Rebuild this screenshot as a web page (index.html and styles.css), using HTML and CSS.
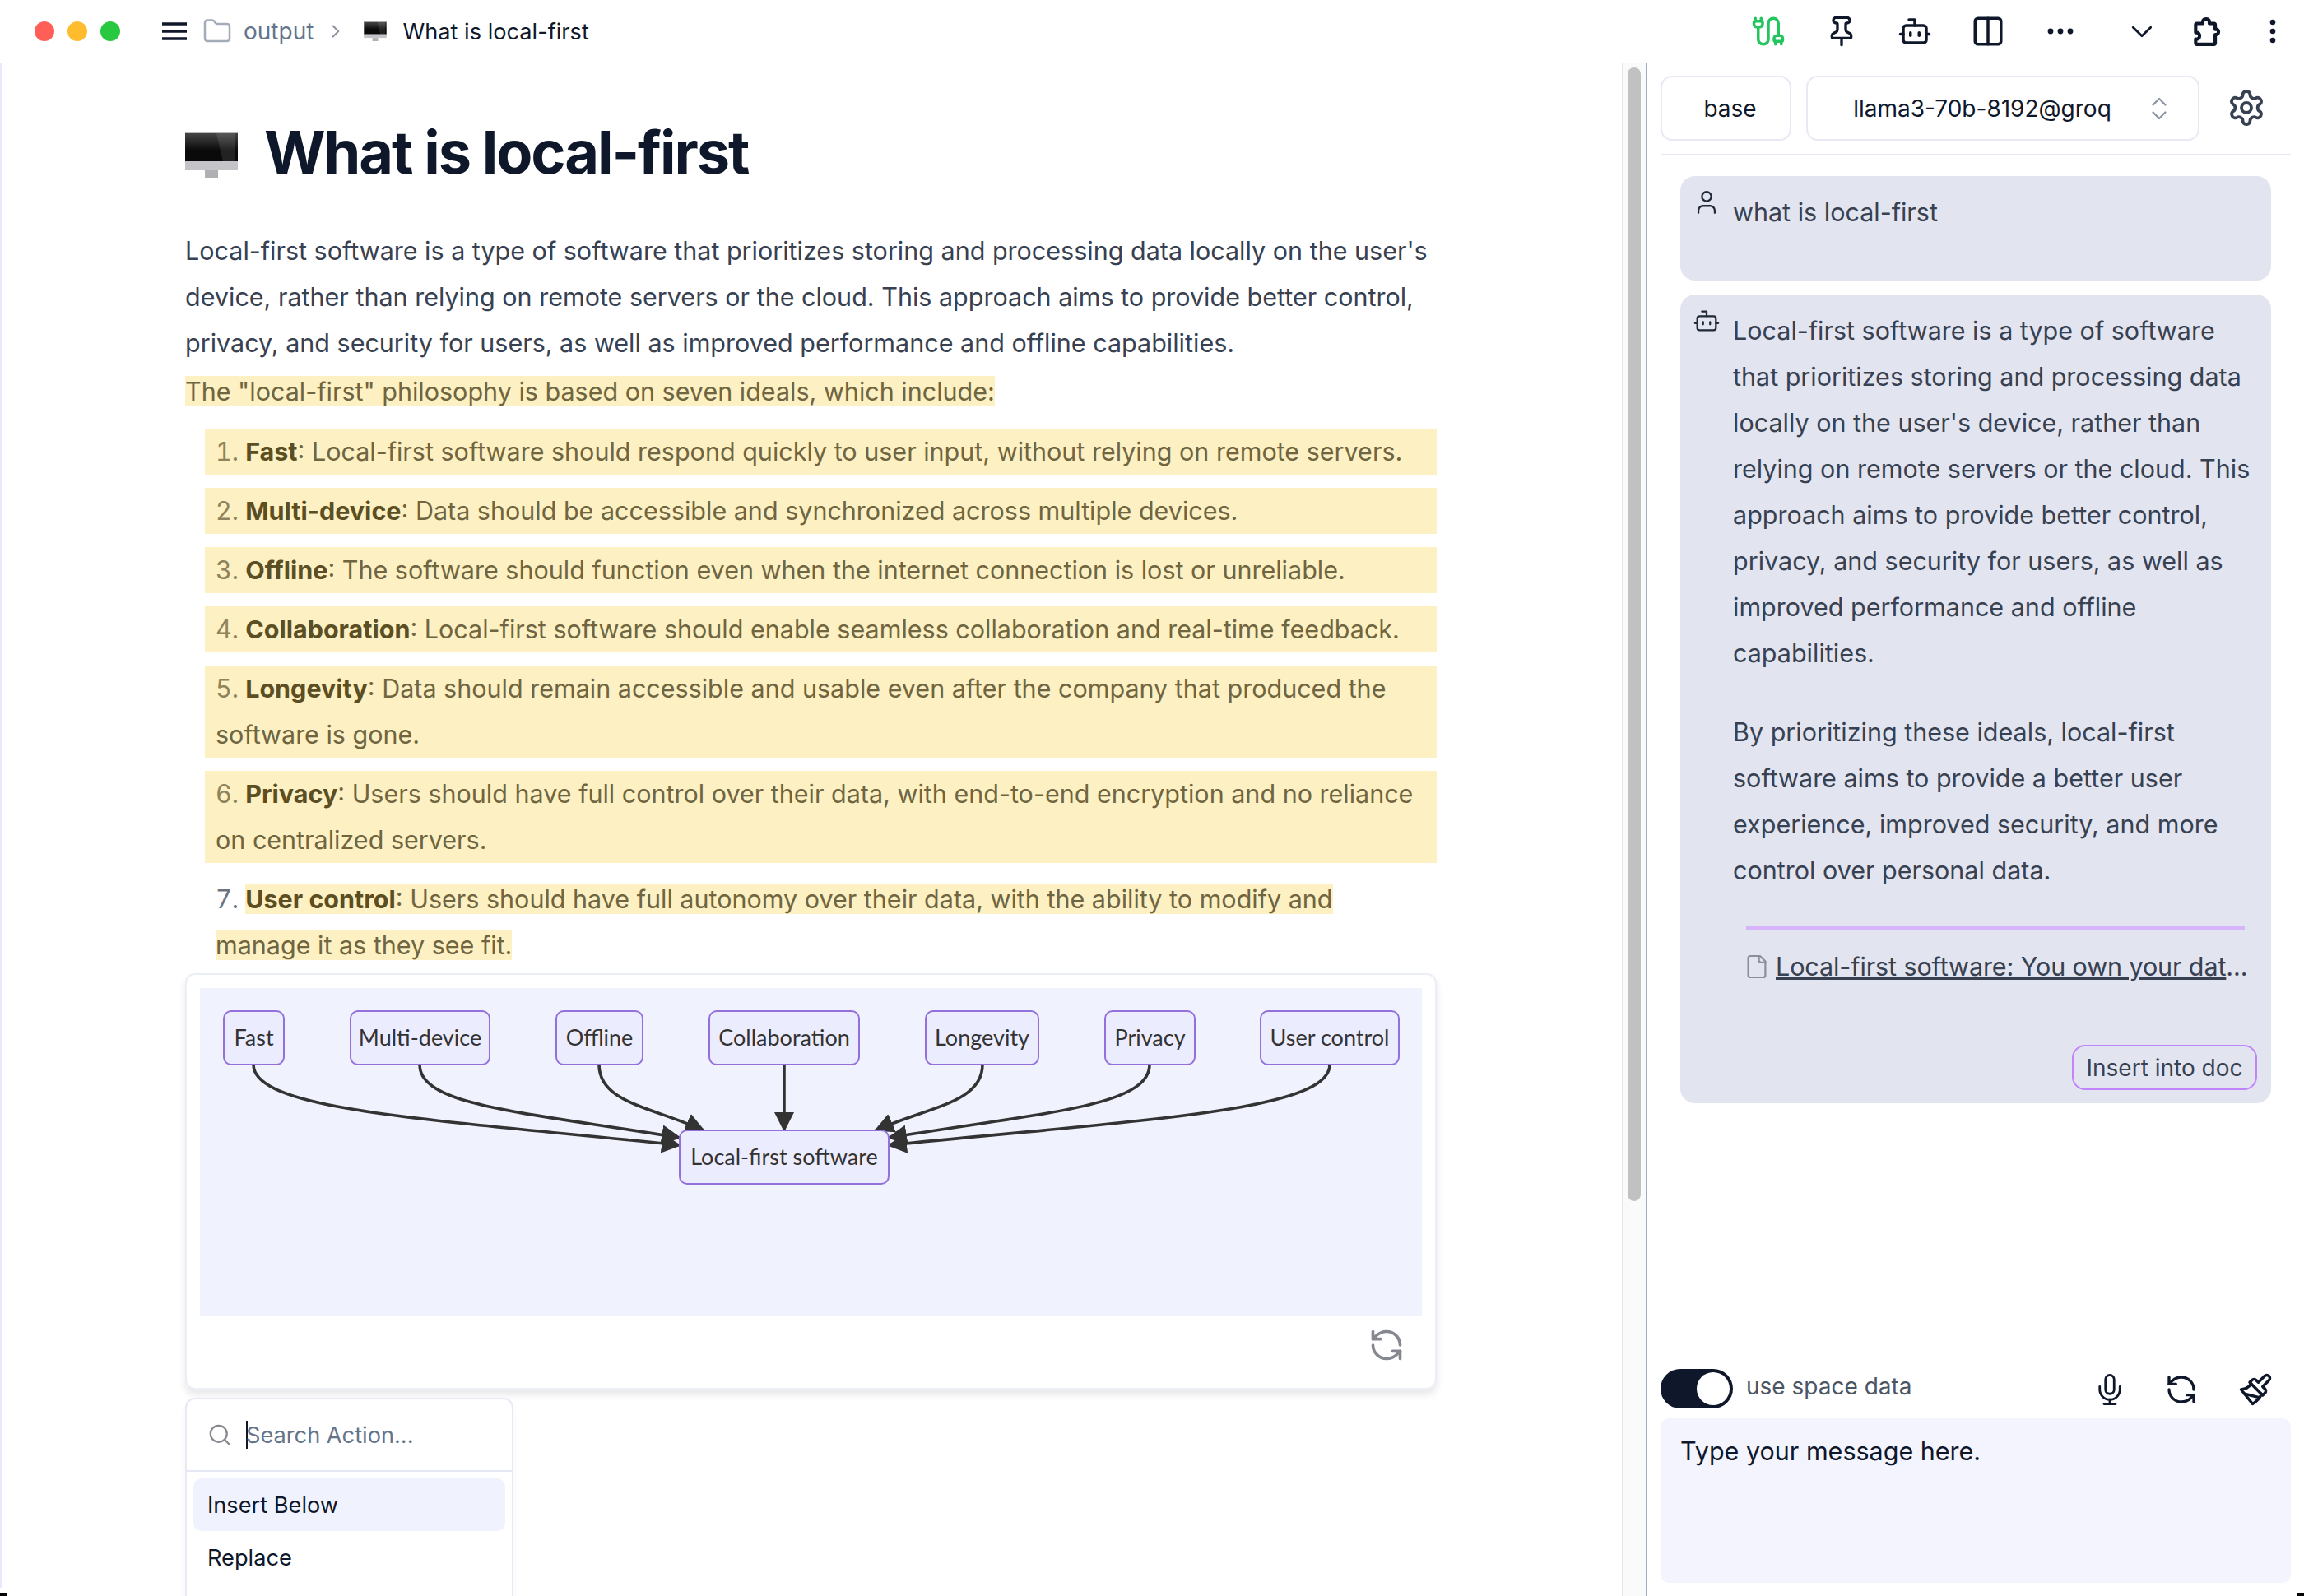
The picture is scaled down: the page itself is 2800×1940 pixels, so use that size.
FILE: index.html
```html
<!DOCTYPE html>
<html lang="en">
<head>
<meta charset="utf-8">
<title>What is local-first</title>
<link rel="stylesheet" href="styles.css">
</head>
<body>
<div class="app">
  <header class="topbar">
    <div class="lights"><span class="light red"></span><span class="light amber"></span><span class="light green"></span></div>
    <svg class="ic menu" viewBox="0 0 30 24"><path d="M0 3h30M0 12h30M0 21h30"/></svg>
    <svg class="ic folder" viewBox="0 0 24 24"><path d="M20 20a2 2 0 0 0 2-2V8a2 2 0 0 0-2-2h-7.9a2 2 0 0 1-1.69-.9L9.6 3.9A2 2 0 0 0 7.93 3H4a2 2 0 0 0-2 2v13a2 2 0 0 0 2 2Z"/></svg>
    <span class="crumb">output</span>
    <svg class="ic chev" viewBox="0 0 24 24"><path d="m9 18 6-6-6-6"/></svg>
    <svg class="imac small" viewBox="0 0 64 56"><use href="#imac"/></svg>
    <span class="crumb-title">What is local-first</span>
    <div class="tools">
      <svg class="ic t-cable" viewBox="0 0 24 24"><path d="M17 21v-2a1 1 0 0 1-1-1v-1a2 2 0 0 1 2-2h2a2 2 0 0 1 2 2v1a1 1 0 0 1-1 1"/><path d="M19 15V6.5a1 1 0 0 0-7 0v11a1 1 0 0 1-7 0V9"/><path d="M21 21v-2h-4"/><path d="M3 5h4V3"/><path d="M7 5a1 1 0 0 1 1 1v1a2 2 0 0 1-2 2H4a2 2 0 0 1-2-2V6a1 1 0 0 1 1-1V3"/></svg>
      <svg class="ic t-pin" viewBox="0 0 24 24"><path d="M12 17v5"/><path d="M9 10.76a2 2 0 0 1-1.11 1.79l-1.78.9A2 2 0 0 0 5 15.24V16a1 1 0 0 0 1 1h12a1 1 0 0 0 1-1v-.76a2 2 0 0 0-1.11-1.79l-1.78-.9A2 2 0 0 1 15 10.76V7a1 1 0 0 1 1-1 2 2 0 0 0 0-4H8a2 2 0 0 0 0 4 1 1 0 0 1 1 1z"/></svg>
      <svg class="ic t-bot" viewBox="0 0 24 24"><path d="M12 8V4H8"/><rect width="16" height="12" x="4" y="8" rx="2"/><path d="M2 14h2"/><path d="M20 14h2"/><path d="M15 13v2"/><path d="M9 13v2"/></svg>
      <svg class="ic t-cols" viewBox="0 0 24 24"><rect width="18" height="18" x="3" y="3" rx="2"/><path d="M12 3v18"/></svg>
      <svg class="t-dots" viewBox="0 0 32 8"><circle cx="4" cy="4" r="3.4"/><circle cx="16" cy="4" r="3.4"/><circle cx="28" cy="4" r="3.4"/></svg>
      <svg class="ic t-down" viewBox="0 0 24 14"><path d="M2 2l10 10L22 2"/></svg>
      <svg class="ic t-ext" viewBox="0 0 24 24"><path d="M5 6h4.5V4.5a2.5 2 0 0 1 5 0V6H18a1 1 0 0 1 1 1v3.5h1a1.5 2 0 0 1 0 4h-1V21a1 1 0 0 1-1 1H5a1 1 0 0 1-1-1v-3h1a2 2.5 0 0 0 0-5H4V7a1 1 0 0 1 1-1z"/></svg>
      <svg class="t-vdots" viewBox="0 0 8 30"><circle cx="4" cy="4" r="3.3"/><circle cx="4" cy="15" r="3.3"/><circle cx="4" cy="26" r="3.3"/></svg>
    </div>
  </header>

  <main class="workspace">
    <section class="doc">
      <h1 class="doc-title">
        <svg class="imac" viewBox="0 0 64 56"><defs>
          <linearGradient id="scr" x1="0" y1="0" x2="0" y2="1"><stop offset="0" stop-color="#4a4a4a"/><stop offset=".6" stop-color="#0a0a0a"/></linearGradient>
          <g id="imac"><rect x="0" y="0" width="64" height="38" fill="url(#scr)"/><rect x="0" y="0" width="64" height="2" fill="#b9b9bd"/><path d="M38 2h22v34H46z" fill="#fff" opacity=".1"/><rect x="0" y="36" width="64" height="11" fill="#c4c4c8"/><rect x="24" y="47" width="16" height="9" fill="#b0b0b4"/></g>
        </defs><use href="#imac"/></svg>
        <span>What is local-first</span>
      </h1>
      <p class="para">Local-first software is a type of software that prioritizes storing and processing data locally on the user's device, rather than relying on remote servers or the cloud. This approach aims to provide better control, privacy, and security for users, as well as improved performance and offline capabilities.</p>
      <p class="para lead"><mark class="hl">The "local-first" philosophy is based on seven ideals, which include:</mark></p>
      <ol class="ideals">
        <li class="on"><strong>Fast</strong>: Local-first software should respond quickly to user input, without relying on remote servers.</li>
        <li class="on"><strong>Multi-device</strong>: Data should be accessible and synchronized across multiple devices.</li>
        <li class="on"><strong>Offline</strong>: The software should function even when the internet connection is lost or unreliable.</li>
        <li class="on"><strong>Collaboration</strong>: Local-first software should enable seamless collaboration and real-time feedback.</li>
        <li class="on"><strong>Longevity</strong>: Data should remain accessible and usable even after the company that produced the software is gone.</li>
        <li class="on"><strong>Privacy</strong>: Users should have full control over their data, with end-to-end encryption and no reliance on centralized servers.</li>
        <li class="last"><mark class="hl"><strong>User control</strong>: Users should have full autonomy over their data, with the ability to modify and manage it as they see fit.</mark></li>
      </ol>
      <div class="diagram-card">
        <div class="diagram">
          <svg class="chart" viewBox="243 1201 1485 399" xmlns="http://www.w3.org/2000/svg">
            <defs>
              <marker id="ah" markerUnits="userSpaceOnUse" markerWidth="24" markerHeight="24" refX="22" refY="12" orient="auto"><path d="M0 0L24 12L0 24z" fill="#333"/></marker>
            </defs>
            <g class="edges">
              <path marker-end="url(#ah)" d="M308 1294C308 1350 520 1360 826 1392"/>
              <path marker-end="url(#ah)" d="M510 1294C510 1345 640 1352 826 1383"/>
              <path marker-end="url(#ah)" d="M728 1294C728 1340 790 1345 855 1374"/>
              <path marker-end="url(#ah)" d="M953 1294L953 1374"/>
              <path marker-end="url(#ah)" d="M1194 1294C1194 1340 1130 1345 1064 1374"/>
              <path marker-end="url(#ah)" d="M1397 1294C1397 1345 1270 1352 1080 1383"/>
              <path marker-end="url(#ah)" d="M1616 1294C1616 1350 1400 1360 1080 1392"/>
            </g>
            <g class="nodes">
              <rect x="272" y="1229" width="73" height="65" rx="9"/><text x="308.5" y="1271">Fast</text>
              <rect x="426" y="1229" width="169" height="65" rx="9"/><text x="510.5" y="1271">Multi-device</text>
              <rect x="676" y="1229" width="105" height="65" rx="9"/><text x="728.5" y="1271">Offline</text>
              <rect x="862" y="1229" width="182" height="65" rx="9"/><text x="953" y="1271">Collaboration</text>
              <rect x="1125" y="1229" width="137" height="65" rx="9"/><text x="1193.5" y="1271">Longevity</text>
              <rect x="1343" y="1229" width="109" height="65" rx="9"/><text x="1397.5" y="1271">Privacy</text>
              <rect x="1532" y="1229" width="168" height="65" rx="9"/><text x="1616" y="1271">User control</text>
              <rect x="826" y="1374" width="254" height="65" rx="9"/><text x="953" y="1416">Local-first software</text>
            </g>
          </svg>
        </div>
        <div class="card-foot">
          <svg class="ic refresh-gray" viewBox="0 0 24 24"><path d="M21 12a9 9 0 0 0-9-9 9.75 9.75 0 0 0-6.74 2.74L3 8"/><path d="M3 3v5h5"/><path d="M3 12a9 9 0 0 0 9 9 9.75 9.75 0 0 0 6.74-2.74L21 16"/><path d="M16 16h5v5"/></svg>
        </div>
      </div>
      <div class="palette">
        <div class="palette-search">
          <svg class="ic search" viewBox="0 0 24 24"><circle cx="11" cy="11" r="8"/><path d="m21 21-4.3-4.3"/></svg>
          <span class="caret"></span><span class="placeholder">Search Action...</span>
        </div>
        <div class="palette-list">
          <div class="palette-item active">Insert Below</div>
          <div class="palette-item">Replace</div>
        </div>
      </div>
    </section>

    <div class="scrollbar"><div class="thumb"></div></div>

    <aside class="panel">
      <div class="panel-head">
        <div class="pick base">base</div>
        <div class="pick model"><span>llama3-70b-8192@groq</span>
          <svg class="ic updown" viewBox="0 0 24 24"><path d="m7 15 5 5 5-5"/><path d="m7 9 5-5 5 5"/></svg>
        </div>
        <svg class="ic gear" viewBox="0 0 24 24"><path d="M12.22 2h-.44a2 2 0 0 0-2 2v.18a2 2 0 0 1-1 1.73l-.43.25a2 2 0 0 1-2 0l-.15-.08a2 2 0 0 0-2.73.73l-.22.38a2 2 0 0 0 .73 2.73l.15.1a2 2 0 0 1 1 1.72v.51a2 2 0 0 1-1 1.74l-.15.09a2 2 0 0 0-.73 2.73l.22.38a2 2 0 0 0 2.73.73l.15-.08a2 2 0 0 1 2 0l.43.25a2 2 0 0 1 1 1.73V20a2 2 0 0 0 2 2h.44a2 2 0 0 0 2-2v-.18a2 2 0 0 1 1-1.73l.43-.25a2 2 0 0 1 2 0l.15.08a2 2 0 0 0 2.73-.73l.22-.39a2 2 0 0 0-.73-2.73l-.15-.08a2 2 0 0 1-1-1.74v-.5a2 2 0 0 1 1-1.74l.15-.09a2 2 0 0 0 .73-2.73l-.22-.38a2 2 0 0 0-2.73-.73l-.15.08a2 2 0 0 1-2 0l-.43-.25a2 2 0 0 1-1-1.73V4a2 2 0 0 0-2-2z"/><circle cx="12" cy="12" r="3"/></svg>
      </div>
      <div class="messages">
        <article class="msg user">
          <svg class="ic who" viewBox="0 0 24 24"><path d="M19 21v-2a4 4 0 0 0-4-4H9a4 4 0 0 0-4 4v2"/><circle cx="12" cy="7" r="4"/></svg>
          <div class="msg-body"><p>what is local-first</p></div>
        </article>
        <article class="msg bot">
          <svg class="ic who" viewBox="0 0 24 24"><path d="M12 8V4H8"/><rect width="16" height="12" x="4" y="8" rx="2"/><path d="M2 14h2"/><path d="M20 14h2"/><path d="M15 13v2"/><path d="M9 13v2"/></svg>
          <div class="msg-body">
            <p>Local-first software is a type of software that prioritizes storing and processing data locally on the user's device, rather than relying on remote servers or the cloud. This approach aims to provide better control, privacy, and security for users, as well as improved performance and offline capabilities.</p>
            <p class="gap">By prioritizing these ideals, local-first software aims to provide a better user experience, improved security, and more control over personal data.</p>
            <hr class="rule">
            <div class="source">
              <svg class="ic file" viewBox="0 0 20 24"><path d="M13 2H4a2 2 0 0 0-2 2v16a2 2 0 0 0 2 2h12a2 2 0 0 0 2-2V7Z"/><path d="M12 2v4a2 2 0 0 0 2 2h4"/></svg>
              <a class="source-link">Local-first software: You own your dat<span class="nou">...</span></a>
            </div>
            <div class="msg-actions"><button class="insert">Insert into doc</button></div>
          </div>
        </article>
      </div>
      <div class="composer">
        <div class="composer-bar">
          <div class="toggle"><span class="knob"></span></div>
          <span class="toggle-label">use space data</span>
          <div class="composer-tools">
            <svg class="ic c-mic" viewBox="0 0 24 24"><path d="M12 2a3 3 0 0 0-3 3v7a3 3 0 0 0 6 0V5a3 3 0 0 0-3-3Z"/><path d="M19 10v2a7 7 0 0 1-14 0v-2"/><path d="M12 19v3M8 22h8"/></svg>
            <svg class="ic c-ref" viewBox="0 0 24 24"><path d="M21 12a9 9 0 0 0-9-9 9.75 9.75 0 0 0-6.74 2.74L3 8"/><path d="M3 3v5h5"/><path d="M3 12a9 9 0 0 0 9 9 9.75 9.75 0 0 0 6.74-2.74L21 16"/><path d="M16 16h5v5"/></svg>
            <svg class="ic c-brush" viewBox="0 0 24 24"><path d="M18.37 2.63 14 7l-1.59-1.59a2 2 0 0 0-2.82 0L8 7l9 9 1.59-1.59a2 2 0 0 0 0-2.82L17 10l4.37-4.37a2.12 2.12 0 1 0-3-3Z"/><path d="M9 8c-2 3-4 3.5-7 4l8 10c2-1 6-5 6-7"/><path d="M14.5 17.5 4.5 15"/></svg>
          </div>
        </div>
        <div class="composer-input">Type your message here.</div>
      </div>
    </aside>
  </main>
  <span class="corner left"></span><span class="corner right"></span>
</div>
</body>
</html>
```
FILE: styles.css
```css
* { box-sizing: border-box; }
html, body { margin: 0; padding: 0; background: #fff; }
body { font-family: Inter, "Liberation Sans", sans-serif; color: #374151; }
.app { position: relative; width: 2800px; height: 1940px; overflow: hidden; display: flex; flex-direction: column; background: #fff; }
.ic { fill: none; stroke: currentColor; stroke-width: 2; stroke-linecap: round; stroke-linejoin: round; flex: none; }

/* top bar */
.topbar { height: 76px; flex: none; display: flex; align-items: center; padding-left: 42px; color: #0f172a; }
.lights { display: flex; gap: 16px; margin-right: 51px; }
.light { width: 24px; height: 24px; border-radius: 50%; }
.red { background: #ff5f57; }
.amber { background: #febc2e; }
.green { background: #28c840; }
.menu { width: 30px; height: 24px; stroke-width: 3.4; stroke-linecap: butt; margin-right: 19px; }
.folder { width: 36px; height: 36px; color: #a5acb9; stroke-width: 1.7; margin-right: 14px; }
.crumb { font-size: 28px; color: #64748b; margin-right: 14px; }
.chev { width: 26px; height: 26px; color: #8b93a3; margin-right: 21px; stroke-width: 1.8; }
.imac.small { width: 28px; height: 24px; margin-right: 19px; flex: none; }
.crumb-title { font-size: 27.2px; color: #0f172a; }
.tools { margin-left: auto; display: flex; align-items: center; position: relative; height: 76px; padding-right: 34px; }
.t-cable { width: 42px; height: 42px; color: #22c55e; margin-right: 48px; }
.t-pin { width: 40px; height: 40px; margin-right: 48px; }
.t-bot { width: 42px; height: 42px; margin-right: 47px; }
.t-cols { width: 42px; height: 42px; margin-right: 51px; }
.t-dots { width: 32px; height: 8px; fill: #0f172a; margin-right: 70px; flex: none; }
.t-down { width: 26px; height: 15px; stroke-width: 2.6; margin-right: 46px; }
.t-ext { width: 38px; height: 38px; margin-right: 58px; stroke-width: 2.6; }
.t-vdots { width: 8px; height: 30px; fill: #0f172a; flex: none; }

/* workspace */
.workspace { flex: 1; min-height: 0; display: flex; }
.doc { width: 1971px; flex: none; background: linear-gradient(#e8e9fb, #e8e9fb) no-repeat 0 0 / 2px calc(100% - 10px); padding: 0 225px; overflow: hidden; }
.doc-title { display: flex; align-items: center; gap: 32px; margin: 0; height: 201px; padding-top: 17px; font-size: 72px; line-height: 1; font-weight: 700; letter-spacing: -2.1px; color: #0f172a; }
.imac { width: 64px; height: 56px; flex: none; }
.doc-title .imac { margin-top: 6px; }
.para { margin: 0; font-size: 30.5px; line-height: 56px; color: #374151; }
.lead { margin-top: 3px; }
.hl { background: #fdf0c2; color: #6f6540; }
.hl strong { color: #5a4e22; }

.ideals { margin: 17px 0 0; padding: 0; list-style: decimal inside; font-size: 30.5px; line-height: 56px; color: #374151; }
.ideals li { margin-top: 16px; padding: 0 23px 0 13px; margin-left: 24px; }
.ideals li:first-child { margin-top: 0; }
.ideals li.on { background: #fdf0c2; color: #6f6540; padding-right: 13px; }
.ideals li.on::marker { color: #8e835b; }
.ideals li.on strong { color: #5a4e22; }
.ideals strong { font-weight: 700; }
.ideals li.last::marker { color: #6b7280; }

/* diagram */
.diagram-card { margin-top: 6px; height: 506px; border: 2px solid #eceef5; border-radius: 12px; padding: 16px; background: #fff; box-shadow: 0 6px 10px rgba(15, 23, 42, .1); }
.diagram { background: #f0f3fe; height: 399px; }
.chart { display: block; width: 100%; height: 100%; }
.edges path { fill: none; stroke: #333; stroke-width: 3.6; }
.nodes rect { fill: #ececff; stroke: #9370db; stroke-width: 2; }
.nodes text { font-family: Lato, "Open Sans", sans-serif; font-size: 27px; fill: #333; text-anchor: middle; }
.card-foot { display: flex; justify-content: flex-end; padding: 13px 21px 0 0; }
.refresh-gray { width: 44px; height: 44px; color: #85898f; stroke-width: 2; }

/* palette */
.palette { margin-top: 10px; width: 399px; height: 300px; border: 2px solid #e8e9f5; border-radius: 12px; background: #fff; box-shadow: 0 4px 8px rgba(15, 23, 42, .04); }
.palette-search { height: 88px; display: flex; align-items: center; padding-left: 25px; border-bottom: 2px solid #e5e7f3; }
.search { width: 30px; height: 30px; color: #85888f; stroke-width: 1.8; margin-right: 17px; }
.caret { width: 2px; height: 34px; background: #0f172a; flex: none; }
.placeholder { font-size: 27.2px; color: #64748b; margin-left: -2px; }
.palette-list { padding: 8px; }
.palette-item { height: 64px; display: flex; align-items: center; padding-left: 17px; font-size: 27.2px; color: #0f172a; border-radius: 10px; }
.palette-item.active { background: #f0f3fe; }

/* scrollbar */
.scrollbar { width: 29px; flex: none; background: #fafafa; border-left: 2px solid #e8e8e8; padding: 6px 6px 0 5px; }
.thumb { width: 16px; height: 1378px; background: #c1c1c1; border-radius: 8px; }

/* panel */
.panel { width: 800px; flex: none; border-left: 2px solid #9fadc4; padding: 16px; display: flex; flex-direction: column; }
.panel-head { height: 97px; flex: none; display: flex; gap: 18px; align-items: flex-start; border-bottom: 2px solid #e6e8f6; }
.pick { height: 79px; border: 2px solid #e8e9f5; border-radius: 14px; display: flex; align-items: center; justify-content: center; font-size: 28px; color: #0f172a; background: #fff; }
.base { width: 159px; padding-left: 10px; }
.model { width: 478px; position: relative; padding-right: 50px; }
.updown { position: absolute; right: 29px; top: 20px; width: 36px; height: 36px; color: #8b93a3; stroke-width: 1.5; }
.gear { width: 48px; height: 48px; margin: 15px 0 0 15px; stroke-width: 1.9; }
.messages { padding: 25px 24px 0; display: flex; flex-direction: column; gap: 17px; flex: 1; }
.msg { background: #e2e4ef; border-radius: 18px; display: flex; padding: 16px 14px 16px 15px; font-size: 30.5px; line-height: 56px; color: #374151; }
.msg p { margin: 0; }
.msg p.gap { margin-top: 40px; }
.user { height: 127px; }
.who { width: 34px; height: 34px; margin: -1px 15px 0 0; stroke-width: 1.6; color: #1f2937; }
.msg-body { flex: 1; min-width: 0; }
.rule { height: 4px; border: 0; background: #d8b4fe; margin: 40px 18px 0 16px; }
.source { display: flex; align-items: center; gap: 10px; margin: 17px 0 0 16px; height: 56px; }
.file { width: 26px; height: 32px; color: #8c8f9b; stroke-width: 1.7; }
.source-link { text-decoration: underline; white-space: nowrap; letter-spacing: -0.1px; }
.nou { text-decoration: none; display: inline-block; }
.msg-actions { display: flex; justify-content: flex-end; margin: 67px 3px 0 0; }
.insert { height: 55px; width: 225px; padding: 0; border: 2px solid #c084fc; border-radius: 16px; background: transparent; font: 28px Inter, sans-serif; color: #374151; }

.composer { flex: none; }
.composer-bar { height: 60px; display: flex; align-items: flex-start; }
.toggle { width: 88px; height: 48px; border-radius: 24px; background: #0f172a; position: relative; flex: none; }
.knob { position: absolute; right: 4px; top: 4px; width: 40px; height: 40px; border-radius: 50%; background: #fff; }
.toggle-label { font-size: 28px; line-height: 42px; color: #4b5563; margin-left: 16px; }
.composer-tools { margin-left: auto; display: flex; align-items: center; padding: 4px 22px 0 0; color: #0f172a; }
.c-mic { width: 42px; height: 42px; margin-right: 46px; stroke-width: 1.6; }
.c-ref { width: 40px; height: 40px; margin-right: 49px; }
.c-brush { width: 42px; height: 42px; }
.composer-input { height: 200px; background: #f3f4fd; border-radius: 10px; padding: 12px 24px; font-size: 30.5px; line-height: 56px; color: #0f172a; }

.corner { position: absolute; bottom: 0; width: 8px; height: 4px; background: #000; }
.corner.left { left: 0; }
.corner.right { right: 0; }
```
